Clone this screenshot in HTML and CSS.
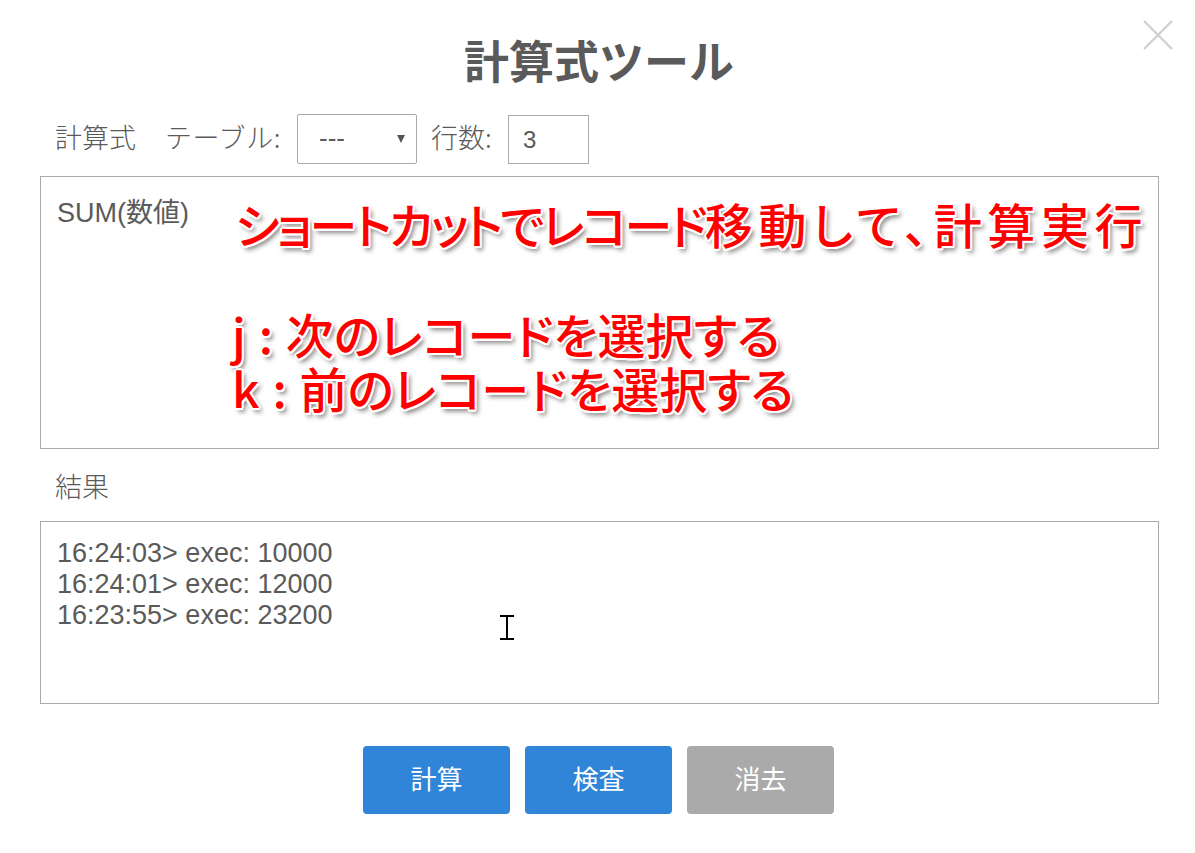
FILE: index.html
```html
<!DOCTYPE html>
<html lang="ja">
<head>
<meta charset="utf-8">
<title>計算式ツール</title>
<link rel="stylesheet" href="styles.css">
</head>
<body>
<main class="dialog">
  <button class="close" aria-label="閉じる">
    <svg width="32" height="32" viewBox="0 0 32 32"><path d="M2 2L30 30M30 2L2 30" stroke="#d0d0d0" stroke-width="2.4" fill="none"/></svg>
  </button>
  <h1 class="title">計算式ツール</h1>
  <div class="toolbar">
    <span class="label">計算式</span>
    <span class="label label-table">テーブル:</span>
    <div class="select"><span>---</span><i class="arrow"></i></div>
    <span class="label label-rows">行数:</span>
    <div class="number">3</div>
  </div>
  <div class="box box-formula">
    <div class="box-text">SUM(数値)</div>
    <div class="note note-top"><span class="tight">ショートカットでレコード</span><span class="wide">移動して、計算実行</span></div>
    <div class="note note-keys">
      <div>j : 次のレコードを選択する</div>
      <div>k : 前のレコードを選択する</div>
    </div>
  </div>
  <div class="label result-label">結果</div>
  <div class="box box-result">
    <div class="box-text">16:24:03&gt; exec: 10000<br>16:24:01&gt; exec: 12000<br>16:23:55&gt; exec: 23200</div>
    <svg class="ibeam" width="14" height="25" viewBox="0 0 14 25"><path d="M0 1H14M0 24H14M7 1V24" stroke="#000" stroke-width="2" fill="none"/></svg>
  </div>
  <div class="actions">
    <button class="btn btn-primary">計算</button>
    <button class="btn btn-primary">検査</button>
    <button class="btn btn-muted">消去</button>
  </div>
</main>
</body>
</html>
```
FILE: styles.css
```css
* { box-sizing: border-box; }
html, body { margin: 0; height: 100%; background: #fff; }
body {
  font-family: "Liberation Sans", "Noto Sans CJK JP", sans-serif;
  color: #5a5a5a;
  overflow: hidden;
}
.dialog {
  position: relative;
  width: 1195px;
  height: 853px;
  padding: 28px 36px 0 40px;
}
.close {
  position: absolute;
  top: 19px;
  right: 21px;
  width: 32px;
  height: 32px;
  padding: 0;
  border: 0;
  background: none;
  line-height: 0;
}
.title {
  margin: 0;
  height: 63px;
  font: 700 45px/63px "Noto Sans CJK JP", sans-serif;
  text-align: center;
  padding-right: 1px;
  color: #5a5a5a;
}
.toolbar {
  display: flex;
  align-items: center;
  height: 51px;
  margin-top: 23px;
  padding-left: 15px;
}
.label {
  font: 300 27px/36px "Noto Sans CJK JP", sans-serif;
  color: #5a5a5a;
}
.toolbar .label { margin-bottom: 6px; }
.label-table { margin-left: 29px; letter-spacing: .6px; width: 132px; }
.label-rows { margin-left: 14px; width: 77px; }
.select {
  display: flex;
  align-items: center;
  justify-content: space-between;
  width: 120px;
  height: 50px;
  margin-bottom: 2px;
  padding: 0 11px 0 21px;
  border: 1px solid #a9a9a9;
  border-radius: 2px;
  font-size: 26px;
  background: #fff;
}
.arrow {
  width: 0;
  height: 0;
  border-left: 4px solid transparent;
  border-right: 4px solid transparent;
  border-top: 8px solid #555;
}
.number {
  width: 81px;
  height: 49px;
  padding-left: 14px;
  border: 1px solid #a9a9a9;
  font-size: 24px;
  line-height: 48px;
}
.box {
  position: relative;
  width: 1119px;
  padding: 16px 16px;
  border: 1px solid #a9a9a9;
  background: #fff;
}
.box-formula { height: 273px; margin-top: 11px; padding-top: 21px; }
.box-text { font-size: 27px; line-height: 31px; }
.result-label { margin: 19px 0 17px 15px; height: 36px; }
.box-result { height: 183px; }
.note {
  position: absolute;
  font: 500 48px/54px "Noto Sans CJK JP", sans-serif;
  font-feature-settings: "palt";
  color: #f00;
  white-space: nowrap;
  word-spacing: 2px;
  text-shadow:
    -2px 0 0 #fff, 2px 0 0 #fff, 0 -2px 0 #fff, 0 2px 0 #fff,
    -1.5px -1.5px 0 #fff, 1.5px -1.5px 0 #fff, -1.5px 1.5px 0 #fff, 1.5px 1.5px 0 #fff,
    3px 4px 5px rgba(0,0,0,.55);
}
.note-top { left: 194px; top: 19px; }
.note-keys { left: 191px; top: 129px; }
.tight { letter-spacing: -2.6px; }
.wide { letter-spacing: 5.6px; }
.ibeam { position: absolute; left: 459px; top: 93px; }
.actions {
  display: flex;
  justify-content: center;
  gap: 15px;
  margin-top: 42px;
  padding-right: 2px;
  width: 1119px;
}
.btn {
  width: 147px;
  height: 68px;
  padding: 0 0 4px;
  border: 0;
  border-radius: 4px;
  color: #fff;
  font: 400 26px/64px "Noto Sans CJK JP", sans-serif;
}
.btn-primary { background: #3085d8; }
.btn-muted { background: #aaa; }
```
